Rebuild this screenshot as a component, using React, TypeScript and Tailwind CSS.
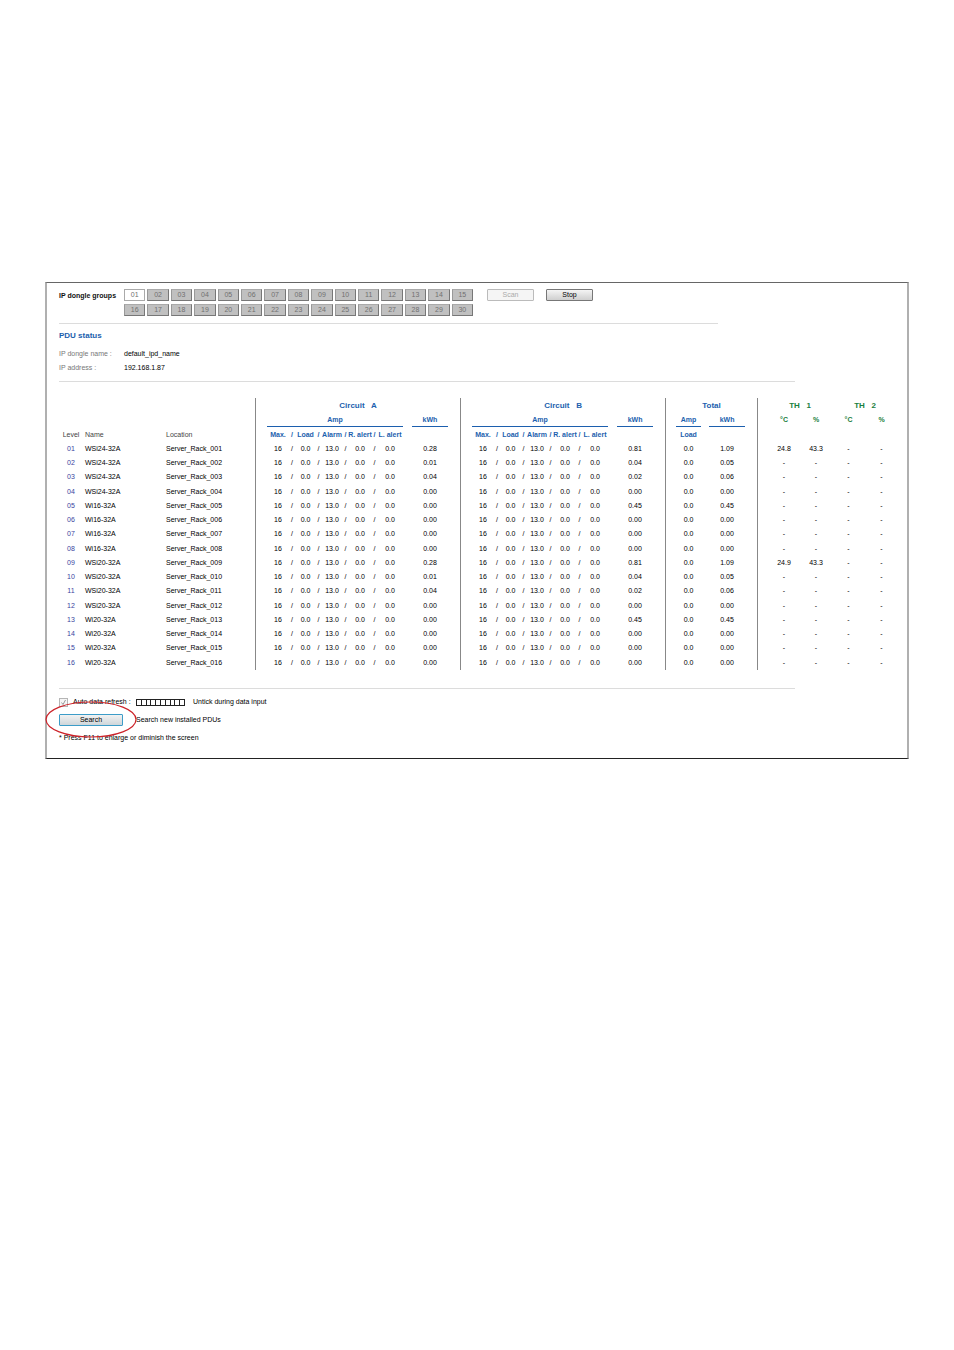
import { clsx } from "clsx";

type Pdu = {
  name: string;
  a: string;
  b: string;
  total: string;
  temp?: string;
  humidity?: string;
};

const READINGS = [
  { a: "0.28", b: "0.81", total: "1.09" },
  { a: "0.01", b: "0.04", total: "0.05" },
  { a: "0.04", b: "0.02", total: "0.06" },
  { a: "0.00", b: "0.00", total: "0.00" },
  { a: "0.00", b: "0.45", total: "0.45" },
  { a: "0.00", b: "0.00", total: "0.00" },
  { a: "0.00", b: "0.00", total: "0.00" },
  { a: "0.00", b: "0.00", total: "0.00" },
];

const MODELS = ["WSi24-32A", "Wi16-32A", "WSi20-32A", "Wi20-32A"];

const PDUS: Pdu[] = Array.from({ length: 16 }, (_, i) => ({
  name: MODELS[Math.floor(i / 4)],
  ...READINGS[i % 8],
  ...(i === 0 && { temp: "24.8", humidity: "43.3" }),
  ...(i === 8 && { temp: "24.9", humidity: "43.3" }),
}));

const pad = (n: number, size: number) => String(n).padStart(size, "0");

const AMP_HEADER = ["Max.", "Load", "Alarm", "R. alert", "L. alert"];
const AMP_VALUES = ["16", "0.0", "13.0", "0.0", "0.0"];

function AmpValues({ values }: { values: string[] }) {
  return (
    <div className="grid w-[136px] grid-cols-[22px_6px_21px_5px_22px_5px_24px_5px_26px]">
      {values.flatMap((value, i) => [
        i > 0 && (
          <span key={`slash-${i}`} className="flex justify-center">
            /
          </span>
        ),
        <span key={i} className="flex justify-center">
          {value}
        </span>,
      ])}
    </div>
  );
}

function Divider({ short = false }: { short?: boolean }) {
  return (
    <hr
      className={clsx(
        "border-[#dcdcdc]",
        short ? "max-w-[659px]" : "max-w-[736px]",
      )}
    />
  );
}

function GroupButtons() {
  return (
    <div className="grid w-[349px] grid-cols-15 gap-x-[2px] gap-y-[3px]">
      {Array.from({ length: 30 }, (_, i) => (
        <button
          key={i}
          type="button"
          className={clsx(
            "h-3 border text-center leading-[10px] text-[#707070]",
            i === 0
              ? "border-[#aaa] bg-white"
              : "border-t-[#aaa] border-r-[#777] border-b-[#777] border-l-[#999] bg-[#c0c0c0]",
          )}
        >
          {pad(i + 1, 2)}
        </button>
      ))}
    </div>
  );
}

function StatusTable() {
  const amp = "border-l border-[#888] pl-[11px]";
  const total = "border-l border-[#888] pl-[10px]";
  const underline = "border-b border-[#1c5fae] leading-[13px]";

  return (
    <table className="mt-4 w-full min-w-[839px] table-fixed border-separate border-spacing-0 whitespace-nowrap leading-[14px]">
      <colgroup>
        <col className="w-6" />
        <col className="w-[83px]" />
        <col className="w-[89px]" />
        <col className="w-[155px]" />
        <col className="w-[50px]" />
        <col className="w-[155px]" />
        <col className="w-[50px]" />
        <col className="w-10" />
        <col className="w-[52px]" />
        <col className="w-[43px]" />
        <col className="w-8" />
        <col className="w-[33px]" />
        <col className="w-[33px]" />
      </colgroup>
      <thead className="text-[#1c5fae]">
        <tr className="h-[15px] text-[8px] leading-[15px]">
          <td colSpan={3} />
          <th colSpan={2} className="whitespace-pre border-l border-[#888]">
            {"Circuit   A"}
          </th>
          <th colSpan={2} className="whitespace-pre border-l border-[#888]">
            {"Circuit   B"}
          </th>
          <th colSpan={2} className="border-l border-[#888]">
            Total
          </th>
          <th
            colSpan={2}
            className="whitespace-pre border-l border-[#888] pl-[10px] text-[#1a8040]"
          >
            {"TH   1"}
          </th>
          <th colSpan={2} className="whitespace-pre text-[#1a8040]">
            {"TH   2"}
          </th>
        </tr>
        <tr className="h-[14px]">
          <td colSpan={3} />
          {["A", "B"].flatMap((circuit) => [
            <th key={`${circuit}-amp`} className={amp}>
              <div className={clsx("w-[136px]", underline)}>Amp</div>
            </th>,
            <th key={`${circuit}-kwh`} className="pl-[2px]">
              <div className={clsx("w-9", underline)}>kWh</div>
            </th>,
          ])}
          <th className={total}>
            <div className={clsx("w-[25px]", underline)}>Amp</div>
          </th>
          <th className="pl-1">
            <div className={clsx("w-9", underline)}>kWh</div>
          </th>
          <th className="border-l border-[#888] pl-[10px] text-[#1a8040]">
            °C
          </th>
          <th className="text-[#1a8040]">%</th>
          <th className="text-[#1a8040]">°C</th>
          <th className="text-[#1a8040]">%</th>
        </tr>
        <tr className="h-[15px] leading-[15px]">
          <th className="font-normal text-[#444]">Level</th>
          <th className="pl-[2px] text-left font-normal text-[#444]">Name</th>
          <th className="text-left font-normal text-[#444]">Location</th>
          <th className={amp}>
            <AmpValues values={AMP_HEADER} />
          </th>
          <td />
          <th className={amp}>
            <AmpValues values={AMP_HEADER} />
          </th>
          <td />
          <th className={total}>
            <div className="w-[25px]">Load</div>
          </th>
          <td />
          <td className="border-l border-[#888]" />
          <td colSpan={3} />
        </tr>
      </thead>
      <tbody className="text-center text-black">
        {PDUS.map((pdu, i) => (
          <tr key={i} className="h-[14px] nth-[4n]:h-[15px]">
            <td className="text-[#3a45a0]">{pad(i + 1, 2)}</td>
            <td className="pl-[2px] text-left">{pdu.name}</td>
            <td className="text-left">Server_Rack_{pad(i + 1, 3)}</td>
            <td className={amp}>
              <AmpValues values={AMP_VALUES} />
            </td>
            <td className="pl-[2px]">
              <div className="w-9">{pdu.a}</div>
            </td>
            <td className={amp}>
              <AmpValues values={AMP_VALUES} />
            </td>
            <td className="pl-[2px]">
              <div className="w-9">{pdu.b}</div>
            </td>
            <td className={total}>
              <div className="w-[25px]">0.0</div>
            </td>
            <td className="pl-1">
              <div className="w-9">{pdu.total}</div>
            </td>
            <td className="border-l border-[#888] pl-[10px]">
              {pdu.temp ?? "-"}
            </td>
            <td>{pdu.humidity ?? "-"}</td>
            <td>-</td>
            <td>-</td>
          </tr>
        ))}
      </tbody>
    </table>
  );
}

function Controls() {
  return (
    <div className="relative mt-1 text-black">
      <div className="flex h-[18px] items-center">
        <div className="flex w-[77px] items-center gap-[5px]">
          <span className="grid size-[9px]">
            <input
              id="auto-refresh"
              type="checkbox"
              defaultChecked
              disabled
              className="col-start-1 row-start-1 size-[9px] appearance-none border border-[#b5b5b5] bg-[#f6f6f6]"
            />
            <svg
              viewBox="0 0 9 9"
              className="pointer-events-none col-start-1 row-start-1 size-[9px] fill-none stroke-[#999]"
            >
              <path d="M2.5 4.5 4 6.5 6.5 2" />
            </svg>
          </span>
          <label htmlFor="auto-refresh">Auto data refresh :</label>
        </div>
        <div className="flex h-[7px] w-[49px] gap-px border border-[#222] bg-[#222]">
          {Array.from({ length: 10 }, (_, i) => (
            <span key={i} className="flex-1 bg-white" />
          ))}
        </div>
        <span className="ml-2">Untick during data input</span>
      </div>
      <div className="flex h-[18px] items-center">
        <div className="w-[77px]">
          <button
            type="button"
            className="block h-3 w-16 rounded-[1px] border border-[#3c9cc8] bg-linear-to-b from-[#f2f2f2] to-[#cfd6da] leading-[10px]"
          >
            Search
          </button>
        </div>
        <span>Search new installed PDUs</span>
      </div>
      <p className="h-[18px] leading-[18px]">
        * Press F11 to enlarge or diminish the screen
      </p>
      <svg
        viewBox="0 0 92 37"
        className="pointer-events-none absolute -left-[14px] top-2 h-[37px] w-[92px] fill-none stroke-[#cc2229]"
      >
        <ellipse cx="46" cy="18.5" rx="45" ry="17.5" strokeWidth="1.2" />
      </svg>
    </div>
  );
}

export default function App() {
  return (
    <main className="min-h-screen bg-white px-[45px] pt-[282px] font-['Liberation_Sans',Arial,sans-serif] text-[7px] leading-[14px]">
      <section className="border-x-2 border-y border-x-[#b0b0b0] border-t-[#666] border-b-[#222] pt-[6px] pr-[9px] pb-[11px] pl-3">
        <div className="flex items-start">
          <h2 className="w-[65px] font-bold whitespace-nowrap text-[#111]">
            IP dongle groups
          </h2>
          <GroupButtons />
          <button
            type="button"
            disabled
            className="ml-[14px] h-3 w-[47px] rounded-[1px] border border-[#bbb] bg-[#f5f5f5] leading-[10px] text-[#aaa]"
          >
            Scan
          </button>
          <button
            type="button"
            className="ml-3 h-3 w-[47px] rounded-[1px] border border-[#777] bg-linear-to-b from-[#f4f4f4] to-[#cfcfcf] leading-[10px] text-black"
          >
            Stop
          </button>
        </div>

        <div className="mt-[7px]">
          <Divider short />
        </div>
        <h1 className="mt-[5px] text-[8px] font-bold text-[#1c5fae]">
          PDU status
        </h1>
        <dl className="mt-1 grid grid-cols-[65px_1fr] text-black">
          <dt className="text-[#777]">IP dongle name :</dt>
          <dd>default_ipd_name</dd>
          <dt className="text-[#777]">IP address :</dt>
          <dd>192.168.1.87</dd>
        </dl>
        <div className="mt-[6px]">
          <Divider />
        </div>

        <StatusTable />

        <div className="mt-[18px]">
          <Divider />
        </div>
        <Controls />
      </section>
    </main>
  );
}
